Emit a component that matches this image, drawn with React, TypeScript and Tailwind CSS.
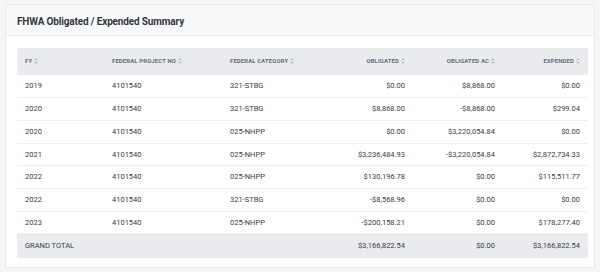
import React from 'react';

type Row = {
    fy: string;
    projectNo: string;
    category: string;
    obligated: string;
    obligatedAc: string;
    expended: string;
};

const rows: Row[] = [
    { fy: '2019', projectNo: '4101540', category: '321-STBG', obligated: '$0.00', obligatedAc: '$8,868.00', expended: '$0.00' },
    { fy: '2020', projectNo: '4101540', category: '321-STBG', obligated: '$8,868.00', obligatedAc: '-$8,868.00', expended: '$299.04' },
    { fy: '2020', projectNo: '4101540', category: '025-NHPP', obligated: '$0.00', obligatedAc: '$3,220,054.84', expended: '$0.00' },
    { fy: '2021', projectNo: '4101540', category: '025-NHPP', obligated: '$3,236,484.93', obligatedAc: '-$3,220,054.84', expended: '$2,872,734.33' },
    { fy: '2022', projectNo: '4101540', category: '025-NHPP', obligated: '$130,196.78', obligatedAc: '$0.00', expended: '$115,511.77' },
    { fy: '2022', projectNo: '4101540', category: '321-STBG', obligated: '-$8,568.96', obligatedAc: '$0.00', expended: '$0.00' },
    { fy: '2023', projectNo: '4101540', category: '025-NHPP', obligated: '-$200,158.21', obligatedAc: '$0.00', expended: '$178,277.40' },
];

const SortIcon = () => (
    <svg width="4" height="6" viewBox="0 0 4 6" className="inline-block ml-[2px] align-[-0.5px]" fill="none" stroke="#8a94a3" strokeWidth="0.8">
        <path d="M0.6 2.2 L2 0.8 L3.4 2.2" />
        <path d="M0.6 3.8 L2 5.2 L3.4 3.8" />
    </svg>
);

const headers: { label: string; right?: boolean; width: string }[] = [
    { label: 'FY', width: 'w-[87px]' },
    { label: 'Federal Project No', width: 'w-[118px]' },
    { label: 'Federal Category', width: 'w-[96px]' },
    { label: 'Obligated', right: true, width: 'w-[95px]' },
    { label: 'Obligated AC', right: true, width: 'w-[90px]' },
    { label: 'Expended', right: true, width: 'w-[85px]' },
];

const App: React.FC = () => {
    return (
        <div className="w-[600px] h-[272px] bg-[#f6f6f7] pt-[4px] px-[5px] font-['Roboto',sans-serif] overflow-hidden">
            <div className="bg-white border border-[#e6e8eb] rounded-[2px] h-[264px]">
                <div className="h-[31px] bg-[#f8f9fa] border-b border-[#eceef0] px-[11px] pt-[2px] flex items-center">
                    <h2 className="text-[10px] font-bold text-[#33373c] tracking-[-0.15px]">FHWA Obligated / Expended Summary</h2>
                </div>
                <div className="px-[11px] pt-[12px]">
                    <table className="w-[571px] border-collapse table-fixed text-[7.5px] text-[#3a3d42]">
                        <thead>
                            <tr className="h-[27px] bg-[#e9ebee]">
                                {headers.map(h => (
                                    <th
                                        key={h.label}
                                        className={`${h.width} px-[8px] font-bold uppercase text-[5.9px] tracking-[0.15px] text-[#656c78] ${h.right ? 'text-right' : 'text-left'}`}
                                    >
                                        {h.label}
                                        <SortIcon />
                                    </th>
                                ))}
                            </tr>
                        </thead>
                        <tbody>
                            {rows.map((r, i) => (
                                <tr key={i} className="h-[22.7px] border-b border-[#eceef0]">
                                    <td className="px-[8px]">{r.fy}</td>
                                    <td className="px-[8px]">{r.projectNo}</td>
                                    <td className="px-[8px]">{r.category}</td>
                                    <td className="px-[8px] text-right">{r.obligated}</td>
                                    <td className="px-[8px] text-right">{r.obligatedAc}</td>
                                    <td className="px-[8px] text-right">{r.expended}</td>
                                </tr>
                            ))}
                            <tr className="h-[24px] bg-[#e9ebee]">
                                <td className="px-[8px]" colSpan={3}>GRAND TOTAL</td>
                                <td className="px-[8px] text-right">$3,166,822.54</td>
                                <td className="px-[8px] text-right">$0.00</td>
                                <td className="px-[8px] text-right">$3,166,822.54</td>
                            </tr>
                        </tbody>
                    </table>
                </div>
            </div>
        </div>
    );
};

export default App;
